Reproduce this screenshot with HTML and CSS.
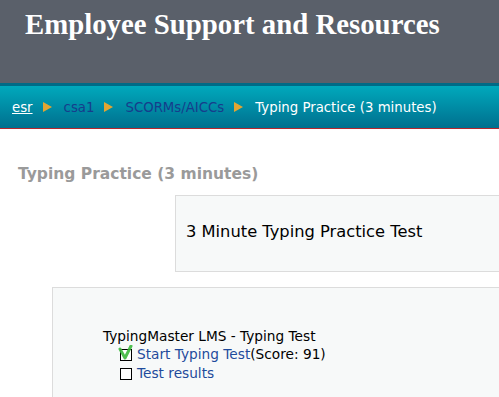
FILE: index.html
```html
<!DOCTYPE html>
<html lang="en">
<head>
    <meta charset="UTF-8">
    <title>Typing Practice (3 minutes)</title>
    <link rel="stylesheet" href="styles.css">
</head>
<body>

    <!-- Header -->
    <div class="header">
        <h1>Employee Support and Resources</h1>
    </div>

    <!-- Breadcrumb -->
    <div class="crumbs">
        <a href="#" class="home">esr</a>
        <span class="arrow"></span>
        <a href="#">csa1</a>
        <span class="arrow"></span>
        <a href="#">SCORMs/AICCs</a>
        <span class="arrow"></span>
        <span class="current">Typing Practice (3 minutes)</span>
    </div>

    <!-- Main Content -->
    <div class="main">
        <h2>Typing Practice (3 minutes)</h2>

        <div class="desc-box">3 Minute Typing Practice Test</div>

        <div class="course-box">
            <div class="course-title">TypingMaster LMS - Typing Test</div>
            <ul class="items">
                <li>
                    <span class="check done">
                        <svg viewBox="0 0 16 16" width="16" height="16"><path d="M2 4 L7 13 L13 1" fill="none" stroke="#3cb83c" stroke-width="3" stroke-linecap="round" stroke-linejoin="round" opacity="0.9"/></svg>
                    </span>
                    <a href="#">Start Typing Test</a>(Score: 91)
                </li>
                <li>
                    <span class="check"></span>
                    <a href="#">Test results</a>
                </li>
            </ul>
        </div>
    </div>

</body>
</html>
```

FILE: styles.css
```css
* {
    margin: 0;
    padding: 0;
    box-sizing: border-box;
}

html, body {
    overflow: hidden;
}

body {
    font-family: "DejaVu Sans", Verdana, sans-serif;
    background: #fff;
    color: #000;
    width: 499px;
    height: 397px;
}

.header {
    height: 83px;
    background: #5a606a;
    padding: 8px 0 0 25px;
}

.header h1 {
    font-family: "Liberation Serif", "Times New Roman", serif;
    font-size: 28.8px;
    font-weight: bold;
    color: #fff;
}

.crumbs {
    height: 46px;
    border-top: 3px solid #006b86;
    border-bottom: 1px solid #b5262e;
    background: linear-gradient(#00a9bc, #006f8e);
    display: flex;
    align-items: center;
    padding: 0 0 0 12px;
    font-size: 13.3px;
}

.crumbs a {
    color: #163d8c;
    text-decoration: none;
}

.crumbs a.home {
    color: #fff;
    text-decoration: underline;
}

.crumbs .current {
    color: #fff;
}

.arrow {
    width: 0;
    height: 0;
    border-top: 5px solid transparent;
    border-bottom: 5px solid transparent;
    border-left: 9px solid #e2a531;
    margin: 0 12px 0 10px;
}

.main {
    padding: 36px 0 0 18px;
}

.main h2 {
    font-size: 15.5px;
    font-weight: bold;
    color: #9a9a9a;
    margin-bottom: 12px;
}

.desc-box {
    margin-left: 157px;
    width: 400px;
    height: 77px;
    background: #f7f9f9;
    border: 1px solid #dcdcdc;
    padding: 26px 0 0 10px;
    font-size: 16.3px;
}

.course-box {
    margin: 15px 0 0 34px;
    width: 500px;
    height: 140px;
    background: #f7f9f9;
    border: 1px solid #dcdcdc;
    padding: 39px 0 0 50px;
    font-size: 13.7px;
}

.course-title {
    line-height: 18px;
}

.items {
    list-style: none;
    padding-left: 17px;
}

.items li {
    display: flex;
    align-items: center;
    line-height: 19px;
}

.items a {
    color: #1f4b9c;
    text-decoration: none;
}

.check {
    position: relative;
    width: 12px;
    height: 12px;
    border: 1px solid #000;
    background: #fff;
    margin-right: 5px;
}

.check svg {
    position: absolute;
    left: -3px;
    top: -5px;
}
```
